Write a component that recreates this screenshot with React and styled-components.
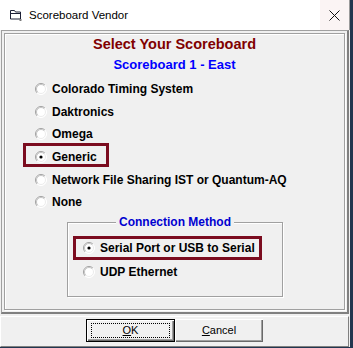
import React from 'react';
import styled, { createGlobalStyle } from 'styled-components';

const GlobalStyle = createGlobalStyle`
  html, body {
    margin: 0;
    padding: 0;
    width: 353px;
    height: 348px;
    overflow: hidden;
    background: #22364f;
  }
  * {
    box-sizing: border-box;
  }
`;

const Window = styled.div`
  width: 350px;
  height: 347px;
  background: #f0f0f0;
  display: flex;
  flex-direction: column;
  font-family: 'Liberation Sans', Arial, sans-serif;
  color: #000;
`;

const TitleBar = styled.div`
  height: 30px;
  flex: none;
  background: #fff;
  display: flex;
  align-items: center;
  padding-left: 10px;
  border-right: 1px solid #9a9a9a;
`;

const TitleText = styled.span`
  margin-left: 7px;
  font-size: 11.5px;
  line-height: 14px;
`;

const CloseBox = styled.div`
  margin-left: auto;
  width: 29px;
  height: 30px;
  background: #fbf4f4;
  display: flex;
  align-items: center;
  justify-content: center;
`;

const Client = styled.div`
  flex: 1;
  display: flex;
  flex-direction: column;
`;

const MainFrame = styled.div`
  height: 284px;
  margin: 0 1px;
  border-style: solid;
  border-width: 1px 2px 2px 1px;
  border-color: #a0a0a0 #808080 #808080 #a0a0a0;
  padding: 2px;
  display: flex;
`;

const InnerFrame = styled.div`
  flex: 1;
  border: 1px solid #a0a0a0;
  box-shadow: inset 1px 1px #fff, 1px 1px #fff;
  padding-top: 1px;
  display: flex;
  flex-direction: column;
`;

const Heading = styled.div`
  text-align: center;
  font-weight: bold;
  font-size: ${(p) => p.$size}px;
  line-height: ${(p) => p.$lh}px;
  color: ${(p) => p.$color};
  margin-top: ${(p) => p.$mt}px;
`;

const OptionList = styled.div`
  margin-top: 6px;
  padding-left: 30px;
  display: flex;
  flex-direction: column;
`;

const Row = styled.div`
  position: relative;
  height: ${(p) => p.$h}px;
  display: flex;
  align-items: center;
  font-size: 12px;
  font-weight: bold;
  line-height: 14px;
  white-space: nowrap;
`;

const Highlight = styled.div`
  position: absolute;
  left: ${(p) => p.$left}px;
  top: ${(p) => p.$top}px;
  width: ${(p) => p.$width}px;
  height: ${(p) => p.$height}px;
  border: 3px solid #7b0c1f;
  pointer-events: none;
`;

const RadioLabel = styled.span`
  margin-left: 5px;
`;

const GroupBox = styled.div`
  position: relative;
  margin: 8px 0 0 62px;
  width: 216px;
  height: 75px;
  border: 1px solid #a0a0a0;
  box-shadow: inset 1px 1px #fff, 1px 1px #fff;
  padding: 13px 0 0 15px;
`;

const GroupLabel = styled.div`
  position: absolute;
  top: -8px;
  left: 0;
  right: 0;
  display: flex;
  justify-content: center;

  span {
    background: #f0f0f0;
    padding: 0 3px;
    font-size: 12px;
    line-height: 14px;
    font-weight: bold;
    color: #0000d0;
  }
`;

const ButtonBar = styled.div`
  flex: 1;
  margin: 2px 1px 0 0;
  border-style: solid;
  border-width: 1px;
  border-color: #fff #808080 #808080 #fff;
  padding-top: 2px;
  display: flex;
  justify-content: center;
  align-items: flex-start;
`;

const Button = styled.div`
  position: relative;
  width: ${(p) => (p.$default ? 89 : 88)}px;
  height: 23px;
  background: #f0f0f0;
  border: ${(p) => (p.$default ? '1px solid #000' : 'none')};
  box-shadow: inset 1px 1px #fff, inset -1px -1px #696969, inset -2px -2px #a0a0a0;
  display: flex;
  align-items: center;
  justify-content: center;
  font-size: 11px;
  line-height: 13px;

  &::after {
    content: '';
    display: ${(p) => (p.$default ? 'block' : 'none')};
    position: absolute;
    inset: 3px 4px;
    border: 1px dotted #000;
  }
`;

const Radio = ({ checked }) => (
  <svg width="12" height="12" viewBox="0 0 12 12" style={{ flex: 'none' }}>
    <circle cx="6" cy="6" r="5.5" fill="#fff" />
    <path d="M2.1 9.9 A5.5 5.5 0 0 1 9.9 2.1" fill="none" stroke="#a0a0a0" />
    <path d="M9.9 2.1 A5.5 5.5 0 0 1 2.1 9.9" fill="none" stroke="#fff" />
    <path d="M2.8 9.2 A4.5 4.5 0 0 1 9.2 2.8" fill="none" stroke="#c4c4c4" />
    <path d="M9.2 2.8 A4.5 4.5 0 0 1 2.8 9.2" fill="none" stroke="#ececec" />
    {checked && <circle cx="6" cy="6" r="1.6" fill="#000" />}
  </svg>
);

const AppIcon = () => (
  <svg width="12" height="11" viewBox="0 0 12 11">
    <path d="M0.5 0.5h4l1 1.5h5v7h-10z" fill="none" stroke="#1c2036" />
    <path d="M0.5 3.5h10" stroke="#1c2036" />
    <path d="M9 8.5l2 2M11 9v1.5H9.5" fill="none" stroke="#777" />
  </svg>
);

const CloseIcon = () => (
  <svg width="11" height="11" viewBox="0 0 11 11">
    <path d="M0.5 0.5l10 10M10.5 0.5l-10 10" stroke="#111" strokeWidth="1" />
  </svg>
);

const vendors = [
  'Colorado Timing System',
  'Daktronics',
  'Omega',
  'Generic',
  'Network File Sharing IST or Quantum-AQ',
  'None',
];

export default function App() {
  return (
    <>
      <GlobalStyle />
      <Window>
        <TitleBar>
          <AppIcon />
          <TitleText>Scoreboard Vendor</TitleText>
          <CloseBox>
            <CloseIcon />
          </CloseBox>
        </TitleBar>
        <Client>
          <MainFrame>
            <InnerFrame>
              <Heading $size={14.5} $lh={16} $color="#800000" $mt={1}>
                Select Your Scoreboard
              </Heading>
              <Heading $size={13} $lh={15} $color="#0000ff" $mt={5}>
                Scoreboard 1 - East
              </Heading>
              <OptionList>
                {vendors.map((v) => (
                  <Row key={v} $h={22.6}>
                    {v === 'Generic' && (
                      <Highlight $left={-12} $top={-2.8} $width={86} $height={24} />
                    )}
                    <Radio checked={v === 'Generic'} />
                    <RadioLabel>{v}</RadioLabel>
                  </Row>
                ))}
              </OptionList>
              <GroupBox>
                <GroupLabel>
                  <span>Connection Method</span>
                </GroupLabel>
                <Row $h={24}>
                  <Highlight $left={-10} $top={0.5} $width={189} $height={23.5} />
                  <Radio checked />
                  <RadioLabel>Serial Port or USB to Serial</RadioLabel>
                </Row>
                <Row $h={24}>
                  <Radio />
                  <RadioLabel>UDP Ethernet</RadioLabel>
                </Row>
              </GroupBox>
            </InnerFrame>
          </MainFrame>
          <ButtonBar>
            <Button $default>
              <span><u>O</u>K</span>
            </Button>
            <Button>
              <span><u>C</u>ancel</span>
            </Button>
          </ButtonBar>
        </Client>
      </Window>
    </>
  );
}
